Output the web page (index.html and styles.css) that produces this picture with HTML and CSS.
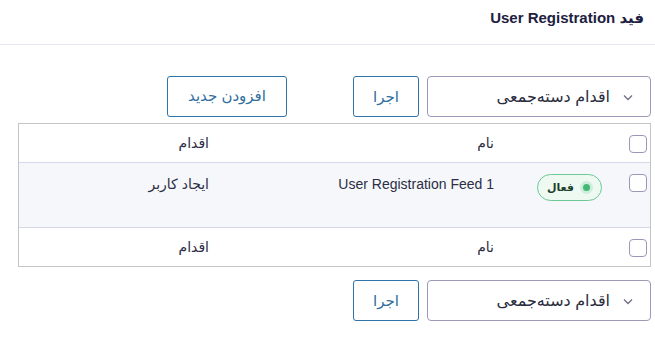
FILE: index.html
```html
<!DOCTYPE html>
<html lang="fa" dir="rtl">
<head>
<meta charset="utf-8">
<link rel="stylesheet" href="styles.css">
</head>
<body>
<header class="topbar">
  <h1 class="title">فید User Registration</h1>
</header>
<main class="content">
  <div class="tablenav top">
    <div class="select">
      <svg class="chev" width="10" height="7" viewBox="0 0 10 7"><path d="M1 1.5 5 5.5 9 1.5" fill="none" stroke="#6f6f86" stroke-width="1.3"/></svg>
      <span>اقدام دسته‌جمعی</span>
    </div>
    <button class="btn">اجرا</button>
    <button class="btn add">افزودن جدید</button>
  </div>

  <div class="table">
    <div class="tr head">
      <div class="c-check"><span class="cb"></span></div>
      <div class="c-status"></div>
      <div class="c-name">نام</div>
      <div class="c-action">اقدام</div>
    </div>
    <div class="tr body">
      <div class="c-check"><span class="cb"></span></div>
      <div class="c-status"><span class="badge"><span class="dot"></span>فعال</span></div>
      <div class="c-name"><bdi>User Registration Feed 1</bdi></div>
      <div class="c-action">ایجاد کاربر</div>
    </div>
    <div class="tr foot">
      <div class="c-check"><span class="cb"></span></div>
      <div class="c-status"></div>
      <div class="c-name">نام</div>
      <div class="c-action">اقدام</div>
    </div>
  </div>

  <div class="tablenav bottom">
    <div class="select">
      <svg class="chev" width="10" height="7" viewBox="0 0 10 7"><path d="M1 1.5 5 5.5 9 1.5" fill="none" stroke="#6f6f86" stroke-width="1.3"/></svg>
      <span>اقدام دسته‌جمعی</span>
    </div>
    <button class="btn">اجرا</button>
  </div>
</main>
</body>
</html>
```

FILE: styles.css
```css
* { box-sizing: border-box; }
html, body {
  margin: 0;
  padding: 0;
  background: #ffffff;
  font-family: "Liberation Sans", "DejaVu Sans", sans-serif;
  color: #2c3338;
}
.topbar {
  height: 45px;
  border-bottom: 1px solid #e6e6ee;
  padding: 0 11px;
  display: flex;
  align-items: center;
}
.title {
  margin: 0;
  margin-top: -9px;
  font-size: 15px;
  font-weight: bold;
  color: #1d2040;
}
.content {
  padding: 31px 4px 0 18px;
}
.tablenav {
  display: flex;
  align-items: center;
  height: 41px;
}
.select {
  width: 224px;
  height: 41px;
  border: 1px solid #9c9ab6;
  border-radius: 4px;
  display: flex;
  align-items: center;
  padding-right: 17px;
  font-size: 16px;
  color: #2a2d3e;
  gap: 13px;
}
.chev { flex: none; margin-top: 1px; }
.btn {
  font-family: "Liberation Sans", "DejaVu Sans", sans-serif;
  height: 41px;
  width: 66px;
  margin-right: 8px;
  border: 1px solid #2f73a8;
  border-radius: 3px;
  background: #fff;
  color: #2f6e9e;
  font-size: 15px;
  padding: 0;
}
.btn.add {
  width: 120px;
  margin-right: 66px;
  height: 41px;
  margin-top: -1px;
}
.table {
  margin-top: 6px;
  border: 1px solid #c3c4c7;
  width: 633px;
}
.tr {
  display: flex;
  align-items: flex-start;
}
.tr.head, .tr.foot { height: 39px; align-items: center; }
.tr.head { border-bottom: 1px solid #d7d7ea; }
.tr.foot { border-top: 1px solid #d7d7ea; }
.tr.body {
  height: 64px;
  background: #f5f7fb;
  padding-top: 11px;
}
.c-check { width: 38px; padding-right: 3px; flex: none; display: flex; }
.cb {
  width: 18px;
  height: 18px;
  border: 1px solid #9a98b6;
  border-radius: 4px;
  background: #fff;
  display: block;
}
.head .c-check, .foot .c-check { padding-top: 1px; }
.body .c-check { padding-top: 0; }
.c-status { width: 118px; flex: none; padding-right: 10px; }
.c-name { width: 285px; flex: none; font-size: 14px; color: #2c2e44; }
.body .c-name { padding-top: 2px; }
.c-action { flex: 1; font-size: 14px; color: #2c2e44; }
.body .c-action { padding-top: 2px; }
.badge {
  display: inline-flex;
  align-items: center;
  gap: 6px;
  height: 27px;
  width: 65px;
  border: 1px solid #6cc894;
  border-radius: 14px;
  background: #eef9f2;
  color: #1f3f2a;
  font-size: 11px;
  font-weight: bold;
  padding-right: 8px;
}
.dot {
  width: 13px;
  height: 13px;
  border-radius: 50%;
  background: #cdeedb;
  position: relative;
  flex: none;
}
.dot::after {
  content: "";
  position: absolute;
  left: 3px;
  top: 3px;
  width: 7px;
  height: 7px;
  border-radius: 50%;
  background: #43b776;
}
.tablenav.bottom { margin-top: 13px; }
```
